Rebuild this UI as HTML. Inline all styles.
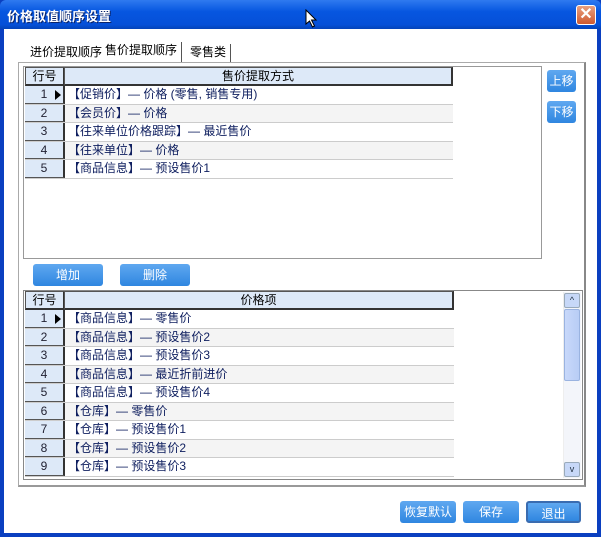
<!DOCTYPE html>
<html><head><meta charset="utf-8"><style>
*{box-sizing:border-box;margin:0;padding:0}
body{width:601px;height:537px;overflow:hidden;background:#0a3fc0;font-family:"Liberation Sans","Noto Sans CJK SC",sans-serif;font-size:12px;color:#000;position:relative}
.title{position:absolute;left:0;top:0;width:601px;height:29px;background:linear-gradient(#2f7af0,#0656e0 40%,#0550d8 85%,#0443b8);border-radius:6px 6px 0 0}
.title span{position:absolute;left:7px;top:6px;color:#fff;font-weight:bold;font-size:13px;text-shadow:1px 1px 0 #0a246a}
.close{position:absolute;left:576px;top:5px;width:20px;height:20px;background:linear-gradient(#e8a080,#d05a30);border:1px solid #fff;border-radius:3px;color:#fff;font-size:16px;line-height:17px;text-align:center;font-weight:bold}
.win{position:absolute;left:4px;top:29px;width:593px;height:504px;background:#fff}
.tab{position:absolute;top:44px;height:19px;font-size:12px;line-height:17px;padding:0 4px}
.panel{position:absolute;left:18px;top:62px;width:568px;height:425px;border:1px solid #aaa;border-right:2px solid #888;border-bottom:2px solid #999}
.grid{position:absolute;border:1px solid #999;background:#fff}
.hdr{position:absolute;height:19px;background:#dde9f8;border:1px solid #555;border-right:2px solid #333;border-bottom:2px solid #333;text-align:center;line-height:16px;color:#000}
.row{position:absolute;height:18.5px;border-bottom:1px solid #ccc}
.num{position:absolute;left:0;width:40px;height:100%;background:#dde9f8;border-right:2px solid #333;border-bottom:1px solid #555;text-align:center;line-height:17px;color:#223}
.txt{position:absolute;left:41px;height:100%;line-height:17px;color:#102060;padding-left:2px}
.arr{position:absolute;left:30px;top:4px;width:0;height:0;border-top:5px solid transparent;border-bottom:5px solid transparent;border-left:6px solid #000}
.btn{position:absolute;height:22px;background:linear-gradient(#5fa8f0,#2f86e0);border-radius:3px;color:#fff;text-align:center;line-height:22px;font-size:12px}
</style></head><body>
<div class="title"><span>价格取值顺序设置</span></div>
<div class="close">✕</div>
<div class="win"></div>
<svg style="position:absolute;left:305px;top:9px" width="14" height="20"><path d="M1 1 L1 15 L4.5 12 L7.5 18 L9.5 17 L6.5 11 L11 11 Z" fill="#fff" stroke="#000"/></svg>
<div class="tab" style="left:26px">进价提取顺序</div>
<div class="tab" style="left:101px;top:42px;height:21px;border-right:1px solid #555">售价提取顺序</div>
<div class="tab" style="left:186px;border-right:1px solid #555">零售类</div>
<div class="panel"></div>

<div class="grid" style="left:23px;top:66px;width:519px;height:193px"></div>
<div class="hdr" style="left:25px;top:67px;width:40px">行号</div>
<div class="hdr" style="left:64px;top:67px;width:389px">售价提取方式</div>
<div class="row" style="left:25px;top:86px;width:428px;background:#fff"><div class="num">1<div class="arr"></div></div><div class="txt">【促销价】— 价格 (零售, 销售专用)</div></div>
<div class="row" style="left:25px;top:104.5px;width:428px;background:#f4f4f4"><div class="num">2</div><div class="txt">【会员价】— 价格</div></div>
<div class="row" style="left:25px;top:123px;width:428px;background:#fff"><div class="num">3</div><div class="txt">【往来单位价格跟踪】— 最近售价</div></div>
<div class="row" style="left:25px;top:141.5px;width:428px;background:#f4f4f4"><div class="num">4</div><div class="txt">【往来单位】— 价格</div></div>
<div class="row" style="left:25px;top:160px;width:428px;background:#fff"><div class="num">5</div><div class="txt">【商品信息】— 预设售价1</div></div>

<div class="btn" style="left:547px;top:70px;width:29px">上移</div>
<div class="btn" style="left:547px;top:101px;width:29px">下移</div>
<div class="btn" style="left:33px;top:264px;width:70px">增加</div>
<div class="btn" style="left:120px;top:264px;width:70px">删除</div>

<div class="grid" style="left:23px;top:290px;width:560px;height:190px;border-color:#888"></div>
<div class="hdr" style="left:25px;top:291px;width:40px">行号</div>
<div class="hdr" style="left:64px;top:291px;width:390px">价格项</div>
<div class="row" style="left:25px;top:310px;width:429px;background:#fff"><div class="num">1<div class="arr"></div></div><div class="txt">【商品信息】— 零售价</div></div>
<div class="row" style="left:25px;top:328.5px;width:429px;background:#f4f4f4"><div class="num">2</div><div class="txt">【商品信息】— 预设售价2</div></div>
<div class="row" style="left:25px;top:347px;width:429px;background:#fff"><div class="num">3</div><div class="txt">【商品信息】— 预设售价3</div></div>
<div class="row" style="left:25px;top:365.5px;width:429px;background:#f4f4f4"><div class="num">4</div><div class="txt">【商品信息】— 最近折前进价</div></div>
<div class="row" style="left:25px;top:384px;width:429px;background:#fff"><div class="num">5</div><div class="txt">【商品信息】— 预设售价4</div></div>
<div class="row" style="left:25px;top:402.5px;width:429px;background:#f4f4f4"><div class="num">6</div><div class="txt">【仓库】— 零售价</div></div>
<div class="row" style="left:25px;top:421px;width:429px;background:#fff"><div class="num">7</div><div class="txt">【仓库】— 预设售价1</div></div>
<div class="row" style="left:25px;top:439.5px;width:429px;background:#f4f4f4"><div class="num">8</div><div class="txt">【仓库】— 预设售价2</div></div>
<div class="row" style="left:25px;top:458px;width:429px;background:#fff"><div class="num">9</div><div class="txt">【仓库】— 预设售价3</div></div>

<div style="position:absolute;left:563px;top:292px;width:18px;height:186px;background:#f3f5fa;border-left:1px solid #eee"></div>
<div style="position:absolute;left:564px;top:293px;width:16px;height:15px;background:#c7d8f8;border:1px solid #9ab;border-radius:2px;font-size:9px;text-align:center;line-height:12px;color:#234">^</div>
<div style="position:absolute;left:564px;top:309px;width:16px;height:72px;background:linear-gradient(90deg,#c8d8fa,#b8cdf5);border:1px solid #9ab3e0;border-radius:2px"></div>
<div style="position:absolute;left:564px;top:462px;width:16px;height:15px;background:#c7d8f8;border:1px solid #9ab;border-radius:2px;font-size:9px;text-align:center;line-height:12px;color:#234">v</div>

<div class="btn" style="left:400px;top:501px;width:56px">恢复默认</div>
<div class="btn" style="left:463px;top:501px;width:56px">保存</div>
<div class="btn" style="left:526px;top:501px;width:55px;border:2px solid #3a6cb0">退出</div>
</body></html>
